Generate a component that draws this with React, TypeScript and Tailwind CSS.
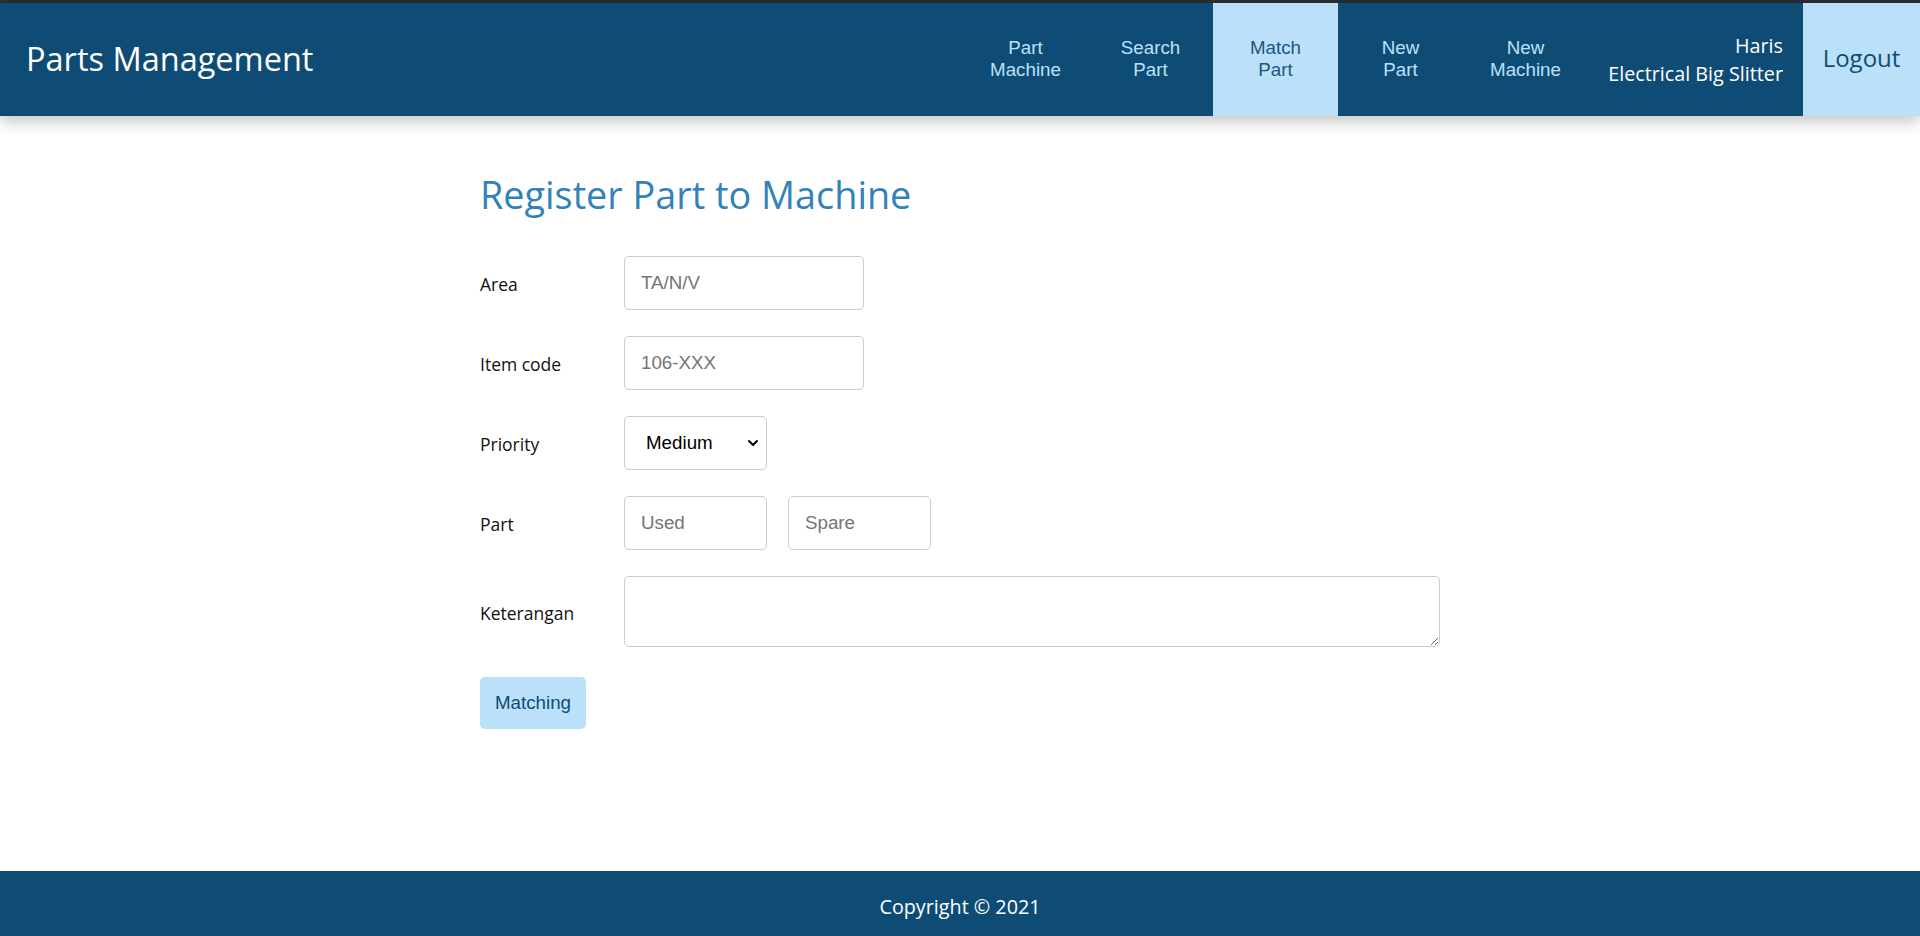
import { ChevronDown } from 'lucide-react';

const navItems = [
    { top: 'Part', bottom: 'Machine', active: false },
    { top: 'Search', bottom: 'Part', active: false },
    { top: 'Match', bottom: 'Part', active: true },
    { top: 'New', bottom: 'Part', active: false },
    { top: 'New', bottom: 'Machine', active: false },
];

const sans = "font-['Open_Sans',sans-serif]";
const arial = "font-['Liberation_Sans',Arial,sans-serif]";

function Label({ children }: { children: string }) {
    return <label className={`w-[144px] shrink-0 pt-[3px] text-[17.5px] text-[#111] ${sans}`}>{children}</label>;
}

function TextInput({ placeholder, width }: { placeholder: string; width: string }) {
    return (
        <input
            type="text"
            placeholder={placeholder}
            className={`${width} h-[54px] rounded-[5px] border border-[#cccccc] bg-white px-4 text-[18.75px] text-[#333] placeholder:text-[#757575] outline-none ${arial}`}
        />
    );
}

export default function App() {
    return (
        <div className="flex min-h-[936px] flex-col bg-white">
            <div className="h-[3px] bg-[#2b2d30]" />
            {/* Header */}
            <header className="relative z-10 flex h-[113px] items-stretch bg-[#0f4c75] shadow-[0_6px_14px_rgba(0,0,0,0.22)]">
                <div className="flex flex-1 items-center pl-[26px]">
                    <h1 className={`text-[32.5px] text-white ${sans}`}>Parts Management</h1>
                </div>
                <nav className="flex items-stretch">
                    {navItems.map((item, i) => (
                        <a
                            key={i}
                            href="#"
                            className={`flex w-[125px] flex-col items-center justify-center pb-[2px] text-[18.75px] leading-[22px] ${arial} ${
                                item.active ? 'bg-[#bbe1fa] text-[#1d5680]' : 'text-[#bbe1fa]'
                            }`}
                        >
                            <span>{item.top}</span>
                            <span>{item.bottom}</span>
                        </a>
                    ))}
                    <div className={`flex w-[215px] flex-col items-end justify-center pr-[20px] text-[19.75px] leading-[28px] text-white ${sans}`}>
                        <span>Haris</span>
                        <span>Electrical Big Slitter</span>
                    </div>
                    <a
                        href="#"
                        className={`flex w-[117px] items-center justify-center bg-[#bbe1fa] pb-[3px] text-[24px] text-[#0f4c75] ${sans}`}
                    >
                        Logout
                    </a>
                </nav>
            </header>

            {/* Form */}
            <main className="flex-1">
                <div className="mx-auto w-[960px] pt-[54px]">
                    <h2 className={`text-[37.8px] leading-[50px] text-[#3282b8] ${sans}`}>Register Part to Machine</h2>

                    <form className="mt-[36px] flex flex-col gap-[26px]" onSubmit={(e) => e.preventDefault()}>
                        <div className="flex items-center">
                            <Label>Area</Label>
                            <TextInput placeholder="TA/N/V" width="w-[240px]" />
                        </div>
                        <div className="flex items-center">
                            <Label>Item code</Label>
                            <TextInput placeholder="106-XXX" width="w-[240px]" />
                        </div>
                        <div className="flex items-center">
                            <Label>Priority</Label>
                            <div className="relative">
                                <select
                                    defaultValue="Medium"
                                    className={`h-[54px] w-[143px] appearance-none rounded-[5px] border border-[#cccccc] bg-white pl-[21px] text-[18.75px] text-black outline-none ${arial}`}
                                >
                                    <option>Low</option>
                                    <option>Medium</option>
                                    <option>High</option>
                                </select>
                                <ChevronDown
                                    className="pointer-events-none absolute right-[6px] top-1/2 h-[16px] w-[16px] -translate-y-1/2 text-black"
                                    strokeWidth={3}
                                />
                            </div>
                        </div>
                        <div className="flex items-center">
                            <Label>Part</Label>
                            <div className="flex gap-[21px]">
                                <TextInput placeholder="Used" width="w-[143px]" />
                                <TextInput placeholder="Spare" width="w-[143px]" />
                            </div>
                        </div>
                        <div className="flex items-center">
                            <Label>Keterangan</Label>
                            <textarea className="h-[71px] flex-1 rounded-[5px] border border-[#cccccc] bg-white px-4 py-2 outline-none" />
                        </div>
                        <div className="mt-[4px]">
                            <button
                                type="submit"
                                className={`h-[52px] w-[106px] rounded-[5px] bg-[#bbe1fa] text-[18.75px] text-[#0f4c75] ${arial}`}
                            >
                                Matching
                            </button>
                        </div>
                    </form>
                </div>
            </main>

            {/* Footer */}
            <footer className={`flex h-[65px] items-center justify-center bg-[#0f4c75] pt-[6px] text-[19.75px] text-white ${sans}`}>
                Copyright © 2021
            </footer>
        </div>
    );
}
